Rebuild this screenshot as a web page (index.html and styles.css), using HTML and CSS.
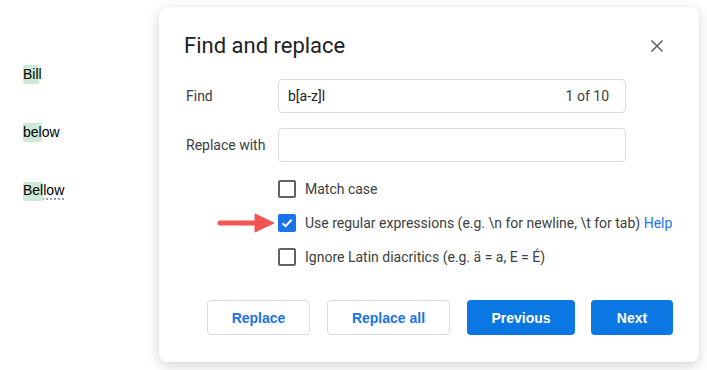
FILE: index.html
```html
<!DOCTYPE html>
<html>
<head>
<meta charset="utf-8">
<link rel="stylesheet" href="styles.css">
</head>
<body>
<div class="doc">
  <p class="line"><span class="hl">Bil</span>l</p>
  <p class="line"><span class="hl">bel</span>ow</p>
  <p class="line"><span class="spell"><span class="hl">Bel</span>low</span></p>
</div>

<div class="dialog">
  <div class="head">
    <h1 class="title">Find and replace</h1>
    <svg class="close" width="14" height="14" viewBox="0 0 14 14"><path d="M1.5 1.5L12.5 12.5M12.5 1.5L1.5 12.5" stroke="#5f6368" stroke-width="1.6" fill="none"/></svg>
  </div>
  <div class="form">
    <label class="lbl">Find</label>
    <div class="field"><span class="val">b[a-z]l</span><span class="count">1 of 10</span></div>
    <label class="lbl">Replace with</label>
    <div class="field"></div>
  </div>
  <div class="options">
    <div class="opt"><span class="box"></span><span>Match case</span></div>
    <div class="opt">
      <svg class="arrow" width="58" height="20" viewBox="0 0 58 20"><path d="M3 10H42" stroke="#f25454" stroke-width="5" stroke-linecap="round"/><path d="M38 1L57 10L38 19Z" fill="#f25454" stroke="#f25454" stroke-width="1" stroke-linejoin="round"/></svg>
      <span class="box checked"><svg width="18" height="18" viewBox="0 0 18 18"><path d="M4.5 9.3L7.6 12.2L13.6 5.8" stroke="#fff" stroke-width="2" fill="none"/></svg></span><span>Use regular expressions (e.g. \n for newline, \t for tab) <a class="help">Help</a></span></div>
    <div class="opt"><span class="box"></span><span>Ignore Latin diacritics (e.g. ä = a, E = É)</span></div>
  </div>
  <div class="actions">
    <button class="btn outline w1">Replace</button>
    <button class="btn outline w2">Replace all</button>
    <button class="btn filled w3">Previous</button>
    <button class="btn filled w4">Next</button>
  </div>
</div>
</body>
</html>
```
FILE: styles.css
```css
html, body {
  margin: 0;
  background: #fff;
  width: 707px;
  height: 370px;
  overflow: hidden;
  position: relative;
}
.doc {
  padding: 65px 0 0 23px;
  font-family: "Liberation Sans", Arial, sans-serif;
  font-size: 14px;
  color: #000;
}
.line {
  margin: 0 0 39px;
  height: 19px;
  line-height: 19px;
}
.hl {
  background: #ceead6;
  border-radius: 2px;
  display: inline-block;
  height: 19px;
}
.spell {
  display: inline-block;
  border-bottom: 2px dotted #9aa0a6;
  line-height: 16px;
  height: 16px;
}
.dialog {
  position: absolute;
  left: 159px;
  top: 7px;
  width: 540px;
  height: 355px;
  box-sizing: border-box;
  background: #fff;
  border-radius: 8px;
  box-shadow: 0 4px 14px rgba(0,0,0,0.16), 0 0 3px rgba(0,0,0,0.05);
  padding: 24px 26px 0 25px;
  font-family: Roboto, "Liberation Sans", sans-serif;
  color: #3c4043;
}
.head {
  display: flex;
  justify-content: space-between;
  align-items: flex-start;
}
.title {
  margin: 0;
  font-size: 22px;
  font-weight: 400;
  line-height: 28px;
  color: #202124;
  padding-top: 1px;
}
.close {
  margin: 8px 9px 0 0;
}
.form {
  display: grid;
  grid-template-columns: 94px 348px;
  row-gap: 15px;
  align-items: center;
  margin-top: 19px;
}
.lbl {
  font-size: 14px;
  padding-left: 2px;
  color: #3c4043;
}
.field {
  height: 34px;
  box-sizing: border-box;
  border: 1px solid #dadce0;
  border-radius: 4px;
  display: flex;
  align-items: center;
  justify-content: space-between;
  padding: 0 16px 0 9px;
  font-size: 14px;
  color: #202124;
}
.count {
  color: #3c4043;
}
.options {
  margin: 18px 0 0 94px;
  display: flex;
  flex-direction: column;
  gap: 16px;
}
.opt {
  position: relative;
  display: flex;
  align-items: center;
  gap: 9px;
  height: 18px;
  font-size: 14px;
  color: #3c4043;
}
.box {
  width: 18px;
  height: 18px;
  box-sizing: border-box;
  border: 2px solid #5f6368;
  border-radius: 2px;
  flex: none;
}
.box.checked {
  border: none;
  background: #1a73e8;
}
.box svg { display: block; }
.help {
  color: #1a73e8;
}
.arrow {
  position: absolute;
  left: -61px;
  top: -1px;
}
.actions {
  display: flex;
  gap: 17px;
  margin: 34px 0 0 23px;
}
.btn {
  height: 35px;
  border-radius: 4px;
  font-family: "Liberation Sans", Arial, sans-serif;
  font-weight: 700;
  font-size: 14px;
  padding: 0;
  cursor: pointer;
}
.outline {
  background: #fff;
  border: 1px solid #dadce0;
  color: #1a73e8;
}
.filled {
  background: #0b77e3;
  border: none;
  color: #fff;
}
.w1 { width: 103px; }
.w2 { width: 123px; }
.w3 { width: 108px; }
.w4 { width: 82px; margin-left: -1px; }
```
